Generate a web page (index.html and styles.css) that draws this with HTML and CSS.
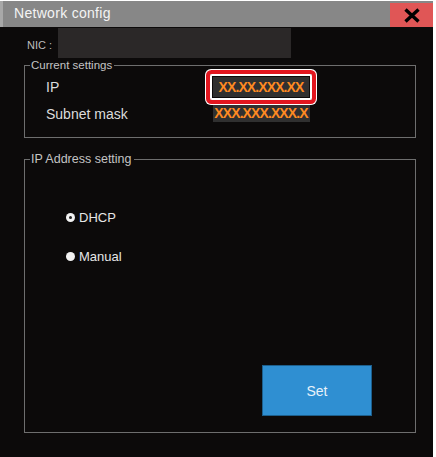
FILE: index.html
```html
<!DOCTYPE html>
<html>
<head>
<meta charset="utf-8">
<link rel="stylesheet" href="styles.css">
</head>
<body>
<div class="window">
  <div class="titlebar">
    <span class="title">Network config</span>
    <span class="close">
      <svg width="18" height="15" viewBox="0 0 18 15"><path d="M2.5 1.5 L15.5 13.5 M15.5 1.5 L2.5 13.5" stroke="#000" stroke-width="3.4" fill="none"/></svg>
    </span>
  </div>
  <div class="content">
    <div class="nic-row">
      <span class="nic-label">NIC :</span>
      <span class="nic-box"></span>
    </div>
    <div class="group group-current">
      <span class="legend legend-small">Current settings</span>
      <div class="settings-grid">
        <span class="label">IP</span>
        <span class="ipbox"><span class="val">XX.XX.XXX.XX</span></span>
        <span class="label">Subnet mask</span>
        <span class="subnet"><span class="val">XXX.XXX.XXX.X</span></span>
      </div>
    </div>
    <div class="group group-ip">
      <span class="legend legend-large">IP Address setting</span>
      <div class="radio-list">
        <div class="radio"><span class="dot dot-on"></span><span>DHCP</span></div>
        <div class="radio"><span class="dot"></span><span>Manual</span></div>
      </div>
      <button class="set-btn">Set</button>
    </div>
  </div>
</div>
</body>
</html>
```
FILE: styles.css
```css
html, body {
  margin: 0;
  padding: 0;
  background: #ffffff;
}
body {
  font-family: "Liberation Sans", Arial, sans-serif;
  width: 436px;
  height: 457px;
  overflow: hidden;
}
.window {
  margin-top: 1px;
  width: 433px;
  height: 456px;
  background: #0c0a0a;
  display: flex;
  flex-direction: column;
}
.titlebar {
  height: 26px;
  background: #878787;
  display: flex;
  align-items: stretch;
  justify-content: space-between;
  border-left: 3px solid #a8a8a8;
}
.title {
  color: #f4f4f4;
  font-size: 14px;
  letter-spacing: 0.3px;
  padding-left: 11px;
  line-height: 25px;
}
.close {
  width: 43px;
  margin-top: 2px;
  background: #e05656;
  display: flex;
  align-items: center;
  justify-content: center;
}
.content {
  padding: 0 17px 0 24px;
  display: flex;
  flex-direction: column;
}
.nic-row {
  display: flex;
  height: 31px;
}
.nic-label {
  width: 31px;
  color: #bdbdbd;
  font-size: 11px;
  align-self: flex-end;
  padding-bottom: 7px;
  padding-left: 3px;
}
.nic-box {
  width: 233px;
  margin-top: 1px;
  background: #2b2828;
}
.group {
  position: relative;
  border: 1px solid #6e6e6e;
}
.legend {
  position: absolute;
  background: #0c0a0a;
  color: #c4c4c4;
  padding: 0 2px 0 1px;
  white-space: nowrap;
}
.legend-small {
  font-size: 11.5px;
  line-height: 13px;
  top: -7px;
  left: 5px;
}
.legend-large {
  font-size: 12.5px;
  line-height: 14px;
  top: -8px;
  left: 5px;
}
.group-current {
  margin-top: 7px;
  padding: 3px 0 15px 21px;
}
.settings-grid {
  display: grid;
  grid-template-columns: 159px 112px;
  grid-template-rows: 36px 17px;
  row-gap: 0;
  align-items: center;
}
.label {
  color: #dcdcdc;
  font-size: 14px;
}
.ipbox {
  justify-self: center;
  margin: 5px;
  padding: 1px;
  border: 2px solid #ffffff;
  border-radius: 2px;
  box-shadow: 0 0 0 4px #e2161f, 0 0 0 5px #ffffff;
  display: flex;
}
.val {
  display: block;
  background: #303030;
  color: #ff8a22;
  font-size: 14px;
  font-weight: bold;
  letter-spacing: -0.9px;
  line-height: 20px;
  width: 96px;
  text-align: center;
}
.subnet {
  justify-self: center;
  display: flex;
}
.subnet .val {
  line-height: 17px;
  width: 97px;
}
.group-ip {
  margin-top: 21px;
  padding: 47px 0 16px 41px;
  display: flex;
  flex-direction: column;
}
.radio-list {
  display: flex;
  flex-direction: column;
  row-gap: 19px;
}
.radio {
  display: flex;
  align-items: center;
  height: 20px;
  color: #e6e6e6;
  font-size: 13px;
  column-gap: 4px;
}
.dot {
  width: 9px;
  height: 9px;
  border-radius: 50%;
  background: #f2f2f2;
  display: flex;
  align-items: center;
  justify-content: center;
}
.dot-on::after {
  content: "";
  width: 3px;
  height: 3px;
  border-radius: 50%;
  background: #222;
}
.set-btn {
  margin-top: 99px;
  margin-left: 196px;
  width: 110px;
  height: 51px;
  background: #2f8fd2;
  border: 1px solid #1d5f8c;
  color: #e8f2fa;
  font-family: "Liberation Sans", Arial, sans-serif;
  font-size: 14px;
  padding: 0;
}
```
